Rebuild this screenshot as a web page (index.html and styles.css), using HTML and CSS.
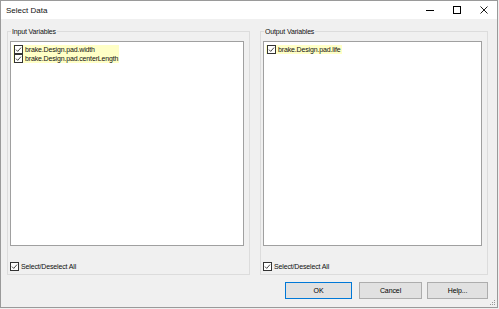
FILE: index.html
```html
<!DOCTYPE html>
<html lang="en">
<head>
  <meta charset="UTF-8">
  <title>Select Data</title>
  <link rel="stylesheet" href="styles.css">
</head>
<body>
  <div class="window">
    <div class="titlebar">
      <span class="title">Select Data</span>
      <div class="controls">
        <svg class="ctl" width="8" height="8" viewBox="0 0 8 8"><path d="M0 4.5H8" stroke="#000" stroke-width="1"/></svg>
        <svg class="ctl" width="8" height="8" viewBox="0 0 8 8"><rect x="0.5" y="0.5" width="7" height="7" fill="none" stroke="#000"/></svg>
        <svg class="ctl" width="8" height="8" viewBox="0 0 8 8"><path d="M0.5 0.5L7.5 7.5M7.5 0.5L0.5 7.5" stroke="#000" stroke-width="0.9"/></svg>
      </div>
    </div>

    <div class="content">
      <div class="groups">
        <fieldset class="group input-group">
          <legend>Input Variables</legend>
          <div class="listbox">
            <div class="items">
              <div class="item">
                <svg class="check" width="9" height="9" viewBox="0 0 9 9"><rect x="0.5" y="0.5" width="8" height="8" fill="#fff" stroke="#333"/><path d="M2 4.6L3.7 6.4L7 2.6" fill="none" stroke="#333" stroke-width="0.9"/></svg>
                <span>brake.Design.pad.width</span>
              </div>
              <div class="item">
                <svg class="check" width="9" height="9" viewBox="0 0 9 9"><rect x="0.5" y="0.5" width="8" height="8" fill="#fff" stroke="#333"/><path d="M2 4.6L3.7 6.4L7 2.6" fill="none" stroke="#333" stroke-width="0.9"/></svg>
                <span>brake.Design.pad.centerLength</span>
              </div>
            </div>
          </div>
          <label class="select-all">
            <svg class="check" width="9" height="9" viewBox="0 0 9 9"><rect x="0.5" y="0.5" width="8" height="8" fill="#fff" stroke="#333"/><path d="M2 4.6L3.7 6.4L7 2.6" fill="none" stroke="#333" stroke-width="0.9"/></svg>
            <span>Select/Deselect All</span>
          </label>
        </fieldset>

        <fieldset class="group output-group">
          <legend>Output Variables</legend>
          <div class="listbox">
            <div class="items">
              <div class="item">
                <svg class="check" width="9" height="9" viewBox="0 0 9 9"><rect x="0.5" y="0.5" width="8" height="8" fill="#fff" stroke="#333"/><path d="M2 4.6L3.7 6.4L7 2.6" fill="none" stroke="#333" stroke-width="0.9"/></svg>
                <span>brake.Design.pad.life</span>
              </div>
            </div>
          </div>
          <label class="select-all">
            <svg class="check" width="9" height="9" viewBox="0 0 9 9"><rect x="0.5" y="0.5" width="8" height="8" fill="#fff" stroke="#333"/><path d="M2 4.6L3.7 6.4L7 2.6" fill="none" stroke="#333" stroke-width="0.9"/></svg>
            <span>Select/Deselect All</span>
          </label>
        </fieldset>
      </div>

      <div class="buttons">
        <button class="btn ok">OK</button>
        <button class="btn cancel">Cancel</button>
        <button class="btn help">Help...</button>
      </div>
    </div>

    <svg class="grip" width="7" height="7" viewBox="0 0 7 7">
      <rect x="5" y="1" width="1" height="1" fill="#999"/>
      <rect x="3" y="3" width="1" height="1" fill="#999"/>
      <rect x="5" y="3" width="1" height="1" fill="#999"/>
      <rect x="1" y="5" width="1" height="1" fill="#999"/>
      <rect x="3" y="5" width="1" height="1" fill="#999"/>
      <rect x="5" y="5" width="1" height="1" fill="#999"/>
    </svg>
  </div>
</body>
</html>
```

FILE: styles.css
```css
body { margin: 0; background: #f0f0f0; font-family: "Liberation Sans", Arial, sans-serif; font-size: 7px; letter-spacing: -0.15px; color: #111; }
.window { position: relative; box-sizing: border-box; width: 498px; height: 308px; border: 1px solid #9a9a9a; background: #f0f0f0; display: flex; flex-direction: column; }
.titlebar { height: 18px; background: #fff; display: flex; align-items: center; justify-content: space-between; padding: 0 9px 0 5px; }
.title { font-size: 8px; letter-spacing: 0; }
.controls { display: flex; align-items: center; gap: 19px; }
.ctl { display: block; }
.content { flex: 1; padding: 8px 9px 0 6px; display: flex; flex-direction: column; }
.groups { display: flex; gap: 10px; }
.group { margin: 0; padding: 0 5px 2px 2px; border: 1px solid #dcdcdc; min-width: 0; box-sizing: border-box; display: flex; flex-direction: column; }
.input-group { width: 243px; }
.output-group { width: 228px; }
.group legend { padding: 0 1px; margin-left: 1px; line-height: 9px; }
.listbox { margin-top: 5px; height: 205px; box-sizing: border-box; border: 1px solid #a0a0a0; background: #fff; padding: 3px 0 0 2px; }
.items { display: inline-block; background: #ffffc6; }
.item { display: flex; align-items: center; gap: 2px; height: 9px; padding-right: 1px; padding-left: 1px; }
.check { display: block; flex: none; }
.select-all { display: flex; align-items: center; gap: 2px; margin-top: 15px; margin-bottom: 1px; height: 10px; }
.buttons { display: flex; justify-content: flex-end; margin-top: 7px; }
.btn { height: 17px; box-sizing: border-box; border: 1px solid #adadad; background: #e1e1e1; font-family: inherit; font-size: 7px; letter-spacing: -0.1px; padding: 0; color: #000; }
.ok { width: 67px; border-color: #0078d7; margin-right: 7px; }
.cancel { width: 63px; margin-right: 5px; }
.help { width: 61px; }
.grip { position: absolute; right: 1px; bottom: 1px; }
```
